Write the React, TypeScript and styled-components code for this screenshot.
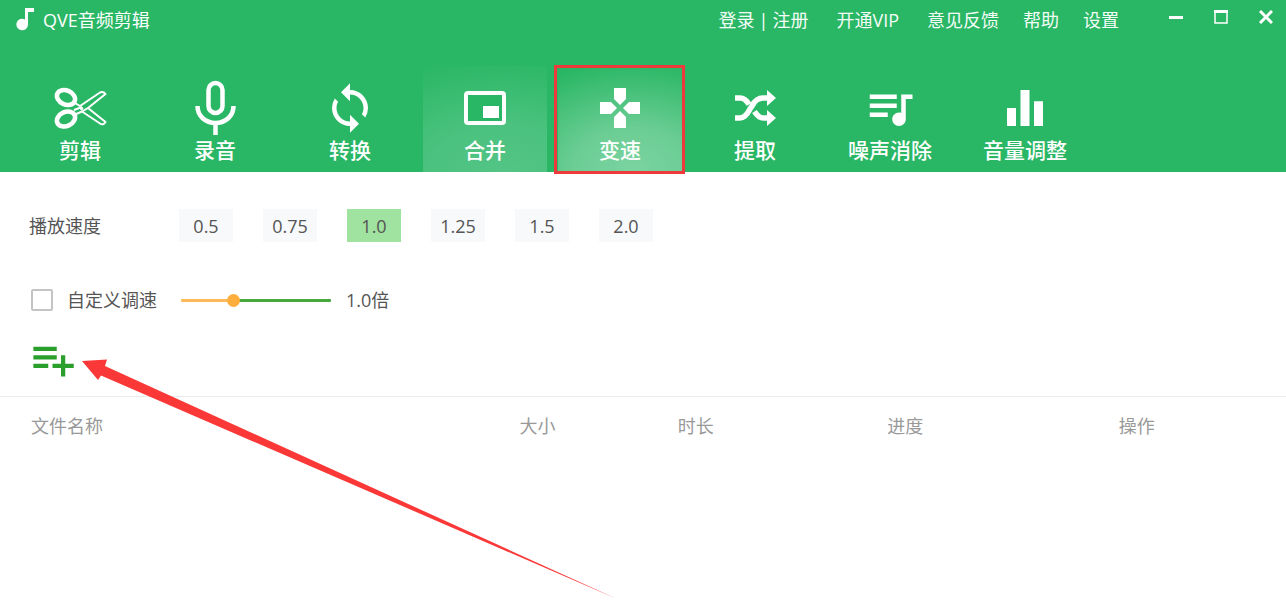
import React, { useState } from "react";
import styled, { createGlobalStyle } from "styled-components";
import {
  MdSync,
  MdGamepad,
  MdQueueMusic,
  MdEqualizer,
  MdPlaylistAdd,
} from "react-icons/md";

const GlobalStyle = createGlobalStyle`
  * { box-sizing: border-box; }
  body {
    margin: 0;
    background: #ffffff;
    color: #555555;
    font-family: "Open Sans", "Noto Sans CJK SC", sans-serif;
    font-size: 18px;
    line-height: 24px;
  }
  button, input { font: inherit; color: inherit; margin: 0; }
  button { border: 0; padding: 0; background: none; cursor: pointer; }
`;

const Window = styled.div`
  position: relative;
  min-height: 100vh;
  overflow: hidden;
`;

const Header = styled.header`
  background: #2ab765;
  color: #ffffff;
`;

const TitleBar = styled.div`
  display: flex;
  align-items: center;
  height: 40px;
  padding-left: 15px;
`;

const Brand = styled.div`
  display: flex;
  align-items: center;
  gap: 8px;
  margin-right: auto;
`;

const Menu = styled.nav<{ $gap: number }>`
  display: flex;
  align-items: center;
  gap: ${(p) => p.$gap}px;
  margin-right: ${(p) => p.$gap}px;
`;

const Account = styled.span`
  display: flex;
  gap: 4px;
`;

const MenuLink = styled.a`
  color: #f4fcf7;
  text-decoration: none;
  white-space: nowrap;
`;

const WindowControls = styled.div`
  display: flex;
  gap: 5px;
  margin-left: 13px;
  padding-bottom: 6px;
`;

const WindowButton = styled.button`
  display: flex;
  align-items: center;
  justify-content: center;
  width: 40px;
  height: 34px;
`;

const Tabs = styled.nav`
  display: flex;
  gap: 11px;
  padding: 26px 18px 0;
`;

const Tab = styled.button<{ $glow?: "soft" | "strong" }>`
  position: relative;
  display: flex;
  flex-direction: column;
  align-items: center;
  width: 124px;
  height: 106px;
  padding-top: 15px;
  font-size: 21px;
  font-weight: 500;
  line-height: 30px;
  background: ${(p) =>
    p.$glow === "strong"
      ? "radial-gradient(ellipse 150px 110px at 60% 100%, #7bd4a0 0%, #6bcd94 40%, #2ab765 100%)"
      : p.$glow === "soft"
        ? "radial-gradient(ellipse 190px 115px at 65% 100%, #53c485 0%, #4bc27f 40%, #2ab765 100%)"
        : "none"};
`;

const TabIcon = styled.span`
  display: flex;
  align-items: center;
  justify-content: center;
  height: 54px;
`;

const Highlight = styled.span`
  position: absolute;
  inset: -1px -3px -2px -4px;
  border: 3px solid #ee3a3c;
  pointer-events: none;
`;

const Settings = styled.main`
  display: flex;
  flex-direction: column;
  padding-top: 37px;
`;

const SpeedRow = styled.div`
  display: flex;
  align-items: center;
  padding: 0 29px;
`;

const RowLabel = styled.span`
  width: 150px;
`;

const SpeedOptions = styled.div`
  display: flex;
  gap: 30px;
`;

const SpeedButton = styled.button<{ $selected: boolean }>`
  width: 54px;
  height: 33px;
  background: ${(p) => (p.$selected ? "#a0e29f" : "#f7f9fb")};
`;

const CustomRow = styled.div`
  display: flex;
  align-items: center;
  margin-top: 46px;
  padding: 0 31px;
`;

const CheckLabel = styled.label`
  display: flex;
  align-items: center;
  gap: 14px;
  width: 150px;
`;

const CheckBox = styled.input`
  appearance: none;
  width: 22px;
  height: 22px;
  background: #ffffff;
  border: 2px solid #c4c4c4;
  border-radius: 2px;

  &:checked {
    background: #a0e29f;
  }
`;

const Slider = styled.input<{ $fill: number }>`
  appearance: none;
  width: 150px;
  height: 14px;
  margin-right: 15px;
  background: transparent;

  &::-webkit-slider-runnable-track {
    height: 3px;
    border-radius: 1px;
    background: linear-gradient(
      to right,
      #fdba5a ${(p) => p.$fill}%,
      #47a83d ${(p) => p.$fill}%
    );
  }

  &::-webkit-slider-thumb {
    appearance: none;
    width: 13px;
    height: 13px;
    margin-top: -5px;
    border-radius: 50%;
    background: #feae3c;
  }
`;

const AddButton = styled.button`
  display: flex;
  align-self: flex-start;
  margin: 22px 0 11px 27px;
  color: #2a9f2c;
`;

const FileTable = styled.table`
  width: 100%;
  table-layout: fixed;
  border-collapse: collapse;
  border-top: 1px solid #ebebeb;
  color: #999999;
`;

const HeadCell = styled.th<{ $width?: string }>`
  width: ${(p) => p.$width ?? "auto"};
  padding: 17px 0;
  font-weight: 400;
  text-align: left;

  &:first-child {
    padding-left: 31px;
  }
`;

const Pointer = styled.svg`
  position: absolute;
  top: 355px;
  left: 80px;
  pointer-events: none;
`;

const NoteIcon = () => (
  <svg width="20" height="24" viewBox="0 0 20 24" fill="currentColor" aria-hidden="true">
    <path d="M10 0h9v4h-6v12.500a5.800 5.800 0 1 1-3-5.100z" />
  </svg>
);

const ScissorsIcon = () => (
  <svg width="54" height="54" viewBox="0 0 54 54" fill="none" stroke="currentColor" aria-hidden="true">
    <g strokeWidth="4.500">
      <ellipse cx="13" cy="16.500" rx="9.500" ry="7" transform="rotate(25 13 16.500)" />
      <ellipse cx="13" cy="38" rx="9.500" ry="7" transform="rotate(-25 13 38)" />
    </g>
    <g strokeWidth="2" strokeLinejoin="round">
      <path d="M21 21.500 27 25 47 11.500c2-1 4-.5 5.500 1.500L35 27l17.500 14c-1.500 2.500-3.500 3-5.500 1.500L29 30.500 21 34" />
      <path d="m21 29 8-3M29 30.500l6-3.500" />
    </g>
    <circle cx="28.500" cy="27.500" r="1.300" fill="currentColor" strokeWidth="1" />
  </svg>
);

const MicIcon = () => (
  <svg width="54" height="58" viewBox="0 0 54 58" fill="none" stroke="currentColor" strokeWidth="4.500" aria-hidden="true">
    <rect x="20.500" y="4" width="14" height="30" rx="7" />
    <path d="M9.500 27c0 10 8 17 18 17s18-7 18-17M27.500 44v12" />
  </svg>
);

const MergeIcon = () => (
  <svg width="42" height="34" viewBox="0 0 42 34" aria-hidden="true">
    <rect x="2" y="2" width="38" height="30" rx="2" fill="#2ab765" stroke="currentColor" strokeWidth="4" />
    <path d="M19 15h16v12H19z" fill="currentColor" />
  </svg>
);

const ShuffleIcon = () => (
  <svg width="44" height="38" viewBox="0 0 44 38" fill="none" stroke="currentColor" strokeWidth="5.500" aria-hidden="true">
    <path d="M2 9h5c5 0 7 3 9 6.500M21.500 22.500c2.500 4 4.500 6.500 9 6.500H35" />
    <path d="M2 29h5c5 0 7.500-4 10-9l2-3c2.500-5 5.500-8 11-8h6" />
    <path d="M34 1v16l9-8zM34 21v16l9-8z" fill="currentColor" stroke="none" />
  </svg>
);

const tabs: { label: string; icon: React.ReactNode; glow?: "soft" | "strong" }[] = [
  { label: "剪辑", icon: <ScissorsIcon /> },
  { label: "录音", icon: <MicIcon /> },
  { label: "转换", icon: <MdSync size={54} /> },
  { label: "合并", icon: <MergeIcon />, glow: "soft" },
  { label: "变速", icon: <MdGamepad size={48} />, glow: "strong" },
  { label: "提取", icon: <ShuffleIcon /> },
  { label: "噪声消除", icon: <MdQueueMusic size={54} /> },
  { label: "音量调整", icon: <MdEqualizer size={54} /> },
];

const speeds = ["0.5", "0.75", "1.0", "1.25", "1.5", "2.0"];

const columns = [
  { label: "文件名称", width: "40.4%" },
  { label: "大小", width: "12.3%" },
  { label: "时长", width: "16.3%" },
  { label: "进度", width: "18%" },
  { label: "操作" },
];

export default function App() {
  const [speed, setSpeed] = useState("1.0");
  const [custom, setCustom] = useState(1);

  return (
    <Window>
      <GlobalStyle />
      <Header>
        <TitleBar>
          <Brand>
            <NoteIcon />
            QVE音频剪辑
          </Brand>
          <Menu $gap={28}>
            <Account>
              <MenuLink href="#login">登录</MenuLink>|
              <MenuLink href="#register">注册</MenuLink>
            </Account>
            <MenuLink href="#vip">开通VIP</MenuLink>
          </Menu>
          <Menu $gap={24}>
            <MenuLink href="#feedback">意见反馈</MenuLink>
            <MenuLink href="#help">帮助</MenuLink>
            <MenuLink href="#settings">设置</MenuLink>
          </Menu>
          <WindowControls>
            <WindowButton aria-label="最小化">
              <svg width="14" height="14" stroke="currentColor" strokeWidth="3">
                <path d="M0 7.500h14" />
              </svg>
            </WindowButton>
            <WindowButton aria-label="最大化">
              <svg width="14" height="14" fill="none" stroke="currentColor">
                <path d="M1 1v12h12V1" strokeWidth="1.500" />
                <path d="M0 1.500h14" strokeWidth="3" />
              </svg>
            </WindowButton>
            <WindowButton aria-label="关闭">
              <svg width="14" height="14" stroke="currentColor" strokeWidth="3">
                <path d="m1 1 12 12M13 1 1 13" />
              </svg>
            </WindowButton>
          </WindowControls>
        </TitleBar>
        <Tabs>
          {tabs.map((t) => (
            <Tab key={t.label} $glow={t.glow}>
              <TabIcon>{t.icon}</TabIcon>
              {t.label}
              {t.glow === "strong" && <Highlight />}
            </Tab>
          ))}
        </Tabs>
      </Header>

      <Settings>
        <SpeedRow>
          <RowLabel id="speed-label">播放速度</RowLabel>
          <SpeedOptions role="group" aria-labelledby="speed-label">
            {speeds.map((s) => (
              <SpeedButton
                key={s}
                $selected={s === speed}
                aria-pressed={s === speed}
                onClick={() => setSpeed(s)}
              >
                {s}
              </SpeedButton>
            ))}
          </SpeedOptions>
        </SpeedRow>
        <CustomRow>
          <CheckLabel>
            <CheckBox type="checkbox" />
            自定义调速
          </CheckLabel>
          <Slider
            type="range"
            id="custom-speed"
            aria-label="自定义调速"
            min={0.5}
            max={2}
            step={0.1}
            value={custom}
            $fill={((custom - 0.5) / 1.5) * 100}
            onChange={(e) => setCustom(Number(e.target.value))}
          />
          <output htmlFor="custom-speed">{custom.toFixed(1)}倍</output>
        </CustomRow>
        <AddButton aria-label="添加文件">
          <MdPlaylistAdd size={51} />
        </AddButton>
        <FileTable>
          <thead>
            <tr>
              {columns.map((c) => (
                <HeadCell key={c.label} $width={c.width} scope="col">
                  {c.label}
                </HeadCell>
              ))}
            </tr>
          </thead>
        </FileTable>
      </Settings>

      <Pointer width="540" height="246" fill="#fb3838" aria-hidden="true">
        <path d="M2 6 27 4.500 25 11 537 244 21 20.500 18 25z" />
      </Pointer>
    </Window>
  );
}
